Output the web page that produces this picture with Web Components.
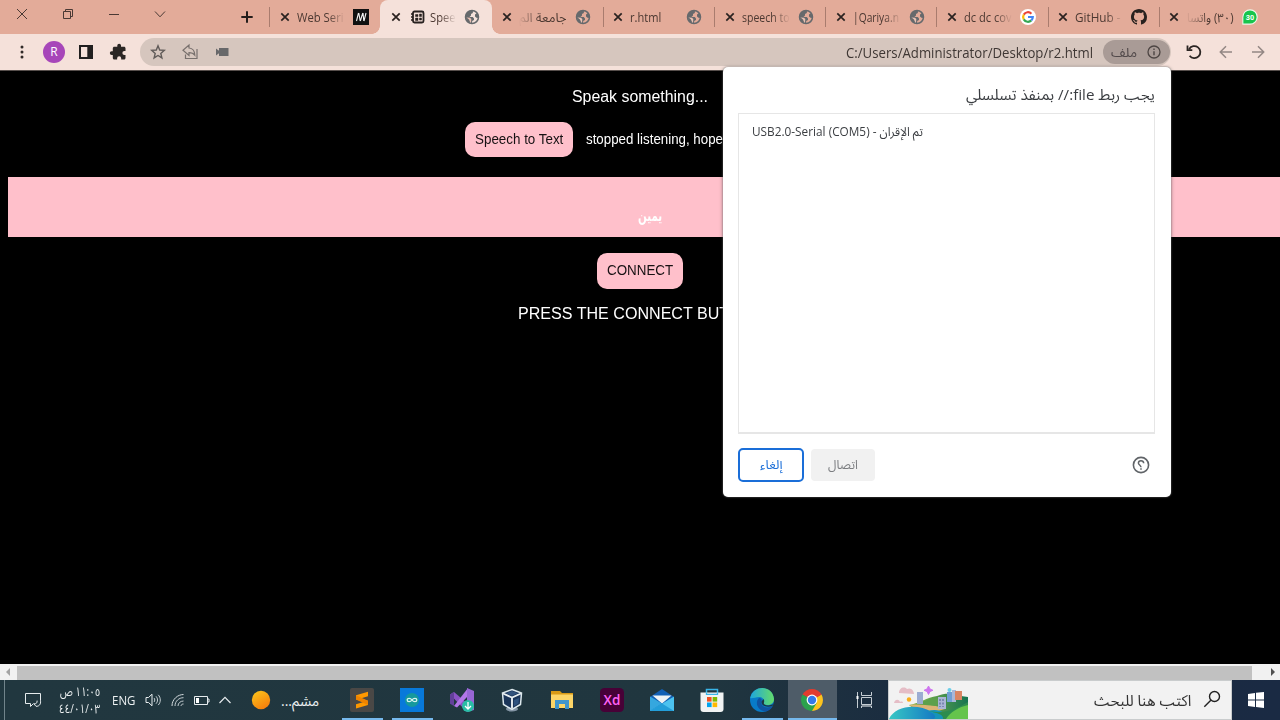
<!DOCTYPE html>
<html lang="ar">
<head>
<meta charset="utf-8">
<title>Speech to Text</title>
<style>
html,body{margin:0;width:1280px;height:720px;overflow:hidden;background:#000}
body{font-family:"Open Sans","Noto Sans Arabic","DejaVu Sans",sans-serif}
</style>
</head>
<body>
<browser-desktop></browser-desktop>
<script>
function component(name, html, setup) {
  const t = document.createElement('template');
  t.innerHTML = html;
  customElements.define(name, class extends HTMLElement {
    connectedCallback() {
      if (this.shadowRoot) return;
      this.attachShadow({mode: 'open'}).appendChild(t.content.cloneNode(true));
      if (setup) setup(this, this.shadowRoot);
    }
  });
}

const globe = `<circle cx="8" cy="8" r="6.500" stroke="#66696c" stroke-width="1.500"/><path fill="#66696c" d="M9 1.500 8.800 4 7 5v1.600L5.500 8H8.800l1.200 1.500v1.600L8.200 12 8 14.500C3.500 14.500 1.500 11 1.500 8 1.500 4 5 1 9 1.500zM13 4l-2 1.500V7.500l1.500 1.300 2 .2c.3-2-.3-4-1.500-5z"/><path fill="#e8c0b3" d="M2.300 8.600 6 8.800l1.300 1.300-.3 3.600C4.500 13.400 2.300 11.300 2.300 8.600z"/><path fill="#66696c" d="m2 8 3 2.500L6.500 14C3.500 13.500 1.700 11 2 8z"/>`;
const icons = {
  close: [10, `<path d="M1.300 1.300 8.700 8.700M8.700 1.300 1.300 8.700" stroke="#2a2220" stroke-width="1.700"/>`],
  winclose: [12, `<path d="M1 1 11 11M11 1 1 11" stroke="#4a3934" stroke-width="1"/>`],
  restore: [12, `<path d="M1.500 3.500h7v7h-7zM3.500 3.500v-2h7v7h-2" stroke="#4a3934" fill="none"/>`],
  minimize: [12, `<path d="M1 6.500h10" stroke="#4a3934"/>`],
  down: [12, `<path d="M1 3.500 6 8.800 11 3.500" fill="none" stroke="#4a3934"/>`],
  plus: [12, `<path d="M6 .3v11.400M.3 6h11.400" stroke="#251d1b" stroke-width="2"/>`],
  globe: [16, globe],
  medium: [16, `<path d="M0 0h16v16H0z" fill="#111"/><path d="M5.500 4 3.500 12M5.800 4l1.400 8M9.800 4l-2.500 8M10 4l.8 8M13 4l-2 8" stroke="#f3f3f3" stroke-width="1.100" fill="none"/>`],
  serial: [14, `<rect x="2" y="1.500" width="10.500" height="11" rx="1.500" fill="none" stroke="#28211f" stroke-width="1.800"/><path d="M4.500 4.500H7v2H4.500zM8.500 4h2v2.500h-2zM4.500 8H7v2.500H4.500zM8.500 8h2v2h-2z" stroke="#28211f" fill="#28211f" stroke-width=".5"/><path d="M0 4h2M0 7h2M0 10h2" stroke="#28211f" stroke-width="1.300"/>`],
  google: [16, `<circle cx="8" cy="8" r="8" fill="#fff"/><g fill="none" stroke-width="2.200"><path d="M11.400 4.700A4.800 4.800 0 0 0 3.800 5.600" stroke="#ea4335"/><path d="M3.800 5.600a4.800 4.800 0 0 0 0 4.800" stroke="#fbbc05"/><path d="M3.800 10.400a4.800 4.800 0 0 0 7.500 1" stroke="#34a853"/><path d="M11.300 11.400A4.800 4.800 0 0 0 12.800 8H8" stroke="#4285f4"/></g>`],
  github: [16, `<path fill="#28211f" d="M8 0C3.580 0 0 3.580 0 8c0 3.540 2.290 6.530 5.470 7.590.4.070.55-.17.55-.38 0-.19-.01-.82-.01-1.490-2.010.37-2.530-.49-2.690-.94-.09-.23-.48-.94-.82-1.130-.28-.15-.68-.52-.01-.53.63-.01 1.080.58 1.230.82.72 1.210 1.870.87 2.330.66.07-.52.28-.87.51-1.070-1.780-.2-3.640-.89-3.640-3.950 0-.87.31-1.590.82-2.150-.08-.2-.36-1.020.08-2.120 0 0 .67-.21 2.200.82.64-.18 1.320-.27 2-.27s1.360.09 2 .27c1.530-1.040 2.200-.82 2.200-.82.44 1.100.16 1.920.08 2.120.51.56.82 1.270.82 2.150 0 3.070-1.870 3.750-3.650 3.950.29.25.54.73.54 1.480 0 1.070-.01 1.930-.01 2.200 0 .21.15.46.55.38A8.010 8.010 0 0 0 16 8c0-4.420-3.580-8-8-8z"/>`],
  whatsapp: [16, `<path d="M.3 15.700 .4 8A7.700 7.700 0 1 1 8 15.700z" fill="#eaf7e9"/><path d="M1.400 14.600V8A6.600 6.600 0 1 1 8 14.600z" fill="#16c54c"/><text x="8" y="10.800" text-anchor="middle" font-family="Liberation Sans" font-weight="700" font-size="7.500" fill="#fff">30</text>`],
  more: [16, `<g fill="#302a28"><circle cx="8" cy="2.900" r="1.500"/><circle cx="8" cy="8" r="1.500"/><circle cx="8" cy="13.100" r="1.500"/></g>`],
  panel: [16, `<path d="M2 2h12v12H2z" fill="none" stroke="#211f1f" stroke-width="2"/><path d="M9.300 2H14v12H9.300z" fill="#211f1f"/>`],
  puzzle: [20, `<path transform="translate(20 0) scale(-.83 .83)" fill="#2b2624" d="M20.500 11H19V7c0-1.100-.9-2-2-2h-4V3.500a2.500 2.500 0 0 0-5 0V5H4c-1.100 0-2 .9-2 2v3.800h1.500a2.700 2.700 0 0 1 0 5.400H2V20c0 1.100.9 2 2 2h3.800v-1.500a2.700 2.700 0 0 1 5.400 0V22H17c1.100 0 2-.9 2-2v-4h1.500a2.500 2.500 0 0 0 0-5z"/>`],
  star: [16, `<path d="M8 1.800 9.700 6l4.600.4-3.500 3 1.100 4.500L8 11.500l-3.900 2.400 1.100-4.500-3.500-3L6.300 6z" fill="none" stroke="#615b59" stroke-width="1.400"/>`],
  share: [18, `<path d="M2 7.200 8 2v3c4 .3 5.700 3.600 5.800 7.200C12.300 10.200 10.600 9.600 8 9.600v2.800zM4.500 11.500v4h11.500V6" fill="none" stroke="#78706d" stroke-width="1.200"/>`],
  camera: [14, `<path d="M4 3h9.500v8H4V8.300L1 10.500v-7L4 5.700z" fill="#68686a"/>`],
  info: [14, `<circle cx="7" cy="7" r="6" fill="none" stroke="#4d4543" stroke-width="1.300"/><path d="M7 6.200v4M7 3.600v1.400" stroke="#4d4543" stroke-width="1.400"/>`],
  reload: [16, `<path d="M3.200 5A6 6 0 1 1 3.600 11.800M1.500 1.500V6.200H6.300" fill="none" stroke="#2b2523" stroke-width="1.800"/>`],
  back: [16, `<path d="M14 8H2.500M8 2.300 2.300 8l5.700 5.700" fill="none" stroke="#938784" stroke-width="1.500"/>`],
  forward: [16, `<path d="M2 8h11.500M8 2.300 13.700 8 8 13.700" fill="none" stroke="#938784" stroke-width="1.500"/>`],
  help: [18, `<circle cx="9" cy="9" r="7.600" fill="none" stroke="#606468" stroke-width="1.600"/><path d="M11.700 7.200C11.500 4 6.500 4 6.400 7c0 2 2.600 2.100 2.600 4.300M9 12.300v1.500" fill="none" stroke="#606468" stroke-width="1.500"/>`],
  notice: [20, `<path d="M2.500 3.500h15v7.200M2.500 3.500v10H7.500v3l3-3M17.500 10.500c.6 4-1.500 6-4.500 5.800l-2.200-2.500c2 .5 3.600-.8 3.300-3.200" fill="none" stroke="#e5ebed"/>`],
  sound: [18, `<path d="M2 6.500h2.500L8 3.200v11.600L4.500 11.500H2z" fill="none" stroke="#e8eef0"/><path d="M10 7c1 1 1 3 0 4M12 5.300c2 2 2 5.400 0 7.400M14.200 3.800c2.800 2.800 2.800 7.500 0 10.300" fill="none" stroke="#c7d0d4"/>`],
  wifi: [16, `<g fill="none"><path d="M2 14C2 7 8 2.500 13.500 2.500" stroke="#d6dde0"/><path d="M5 14C5 9 9 5.700 13.500 5.700M8 14c0-3 2.500-5 5.500-5M11 14c.2-1.400 1-2 2.500-2" stroke="#c5ced2"/></g>`],
  battery: [18, `<path d="M1.500 5.500h13v8h-13zM14.500 8H16v3h-1.500" fill="none" stroke="#e5eaed"/><path d="M3 7h3v5H3z" fill="#fff"/>`],
  up: [14, `<path d="M1.500 10 7 4.300l5.500 5.700" fill="none" stroke="#e6ebed" stroke-width="1.200"/>`],
  sun: [20, `<defs><linearGradient id="a" x1=".2" y1="0" x2=".8" y2="1"><stop stop-color="#fbc21b"/><stop offset="1" stop-color="#f57a0c"/></linearGradient></defs><circle cx="10" cy="10" r="9.200" fill="url(#a)"/>`],
  sublime: [24, `<rect width="24" height="24" rx="2" fill="#4a4846"/><path d="M6 7.300 18 3.800v4.400L10.500 10.500 18 12.800v4.300L6 20.400v-4.200l7.500-2.200L6 11.600z" fill="#ff9800"/><path d="M6 7.300v4.300l12 5.500v-4.300z" fill="#f08300"/>`],
  arduino: [24, `<path d="M0 0h24v24H0z" fill="#0879da"/><circle cx="12" cy="12" r="7" fill="#15999d"/><path d="M12 12c-1.500-2.200-4.800-2.200-4.800 0s3.300 2.200 4.800 0 4.800-2.200 4.800 0-3.300 2.200-4.800 0z" fill="none" stroke="#d8f4ef" stroke-width="1.300"/>`],
  vs: [26, `<path d="M1 7.500 5 5l14 12-1 8z" fill="#8b52c6"/><path d="m1 7.500 4-2.500v14l-4-2.300z" fill="#63409b"/><path d="M5 19 19 1v8L8 20.500z" fill="#b276e7"/><path d="m18 1 7 3v19l-7 2z" fill="#9866d5"/><circle cx="19" cy="19" r="6" fill="#29bda5"/><path d="M19 15v7m-3-3 3 3 3-3" fill="none" stroke="#fff" stroke-width="1.300"/>`],
  vbox: [24, `<ellipse cx="12" cy="21" rx="6" ry="2.600" fill="#8495a5"/><path d="m12 1.500 9.500 3.500-1 11.500-8.500 5-8.500-5L2.500 5z" fill="#1b3559" stroke="#dce8ed" stroke-width="1.500"/><path d="m3 5.500 9 4 9-4M12 9.500v11" fill="none" stroke="#e8eff2" stroke-width="1.900"/><path d="m12 3 6 2.300L12 7.800 6 5.300z" fill="#31527c"/><path d="m14 12 5-2-.5 5.500-4.500 2.800z" fill="#2e527e"/>`],
  folder: [24, `<path d="M1 3h9l2 2h11v4H1z" fill="#d89a16"/><path d="M1 6.500h22V20H1z" fill="#fcd567"/><path d="M5 12h14v9h-4v-5H9v5H5z" fill="#4096cd"/>`],
  xd: [24, `<rect width="24" height="24" rx="4.500" fill="#470137"/><text x="12" y="17" text-anchor="middle" textLength="17" font-size="13.500" font-weight="600" font-family="Open Sans" fill="#ff61f6">Xd</text>`],
  mail: [26, `<path d="m1 10 12-8 12 8v14H1z" fill="#1260b5"/><path d="M3.500 8.500h19l-9.500 8z" fill="#eef3f5"/><path d="M1 9.500 13 16.500 1 24z" fill="#35a7df"/><path d="M25 9.500V24H1z" fill="#4cc2ef"/><path d="m13 16.500 12 7.500H1z" fill="#239ed9"/>`],
  store: [24, `<path d="M6.500 7V1.500h11V7" fill="none" stroke="#39b5e7" stroke-width="1.500"/><path d="M.5 4.500h23V21q0 3-3 3h-17q-3 0-3-3z" fill="#f1f3f3"/><path d="M6.500 4.500v1.800h11V4.500" stroke="#39b5e7" stroke-width="1.300"/><path d="M7 9h4.600v4.600H7z" fill="#f25022"/><path d="M12.600 9h4.600v4.600h-4.600z" fill="#7fba00"/><path d="M7 14.500h4.600v4.600H7z" fill="#00a4ef"/><path d="M12.600 14.500h4.600v4.600h-4.600z" fill="#ffb900"/>`],
  edge: [26, `<defs><linearGradient id="b"><stop stop-color="#1fa6dc"/><stop offset="1" stop-color="#65dc6a"/></linearGradient></defs><circle cx="13" cy="13" r="12" fill="#087bc9"/><path d="M1.200 11C4-3 24-2 25 12c0 4-3 6-7 6-3 0-4-1-3.500-2.300 1.500-3-1-5.700-4-5.700-4 0-8 2-9.300 1z" fill="url(#b)"/><path d="M10 11c-5 5-.5 12.500 6 13.500 3-.3 6-2 8-5.500-6 3-13 1-11.500-5C12.800 13 13 11 10 11z" fill="#1053a1"/><path d="M14.500 12c2 3-1 4 1 5.500 2.500 1.500 6 1.200 8.500-.5l-.5 2C18 21 12 19 12.500 14.500z" fill="#1d3443"/>`],
  chrome: [24, `<path d="M12 12 2.500 6.500A11 11 0 0 1 21.500 6.500z" fill="#e23b2e"/><path d="M12 12 2.500 6.500A11 11 0 0 0 12 23l5.500-8z" fill="#2ba24c"/><path d="M12 12l9.500-5.500A11 11 0 0 1 12 23l4.800-8.300z" fill="#fcc31e"/><path d="M12 6.500h9.500L12 12z" fill="#e23b2e"/><circle cx="12" cy="12" r="5.400" fill="#fff"/><circle cx="12" cy="12" r="4.200" fill="#3579e9"/>`],
  taskview: [18, `<path d="M2.500 1v16M6.500 1v3.500h10V1M6.500 6.500h10v7h-10zM6.500 17v-2h10v2" fill="none" stroke="#c5cdd3"/><path d="M1.500 5h2v3h-2z" fill="#fff"/><path d="M7 14h9v2H7z" fill="#8a949d"/>`],
  search: [20, `<circle cx="12.500" cy="7.500" r="5" fill="none" stroke="#222" stroke-width="1.400"/><path d="m8.800 11.200-6.500 6.500" stroke="#222" stroke-width="1.400"/>`],
  windows: [18, `<path d="m1 3 7-1v6.500H1zm8-1.200L17 1v7.500H9zM1 9.500h7V16l-7-1zm8 0h8V17l-8-.9z" fill="#fff"/>`]
};

component('ui-icon', `<style>:host{display:block;flex:none}svg{display:block}</style>`, (el, root) => {
  const [size, art] = icons[el.getAttribute('name')];
  const px = +(el.getAttribute('size') || size);
  root.innerHTML += `<svg width="${px}" height="${px}" viewBox="0 0 ${size} ${size}" fill="none">${art}</svg>`;
});

component('city-art', `<style>:host{display:block;width:79px;height:38px;flex:none}svg{display:block}</style>
<svg width="79" height="38" viewBox="0 0 79 38"><defs><linearGradient id="w"><stop stop-color="#38c7c4"/><stop offset="1" stop-color="#1273c4"/></linearGradient><linearGradient id="g"><stop stop-color="#8dbb49"/><stop offset="1" stop-color="#167451"/></linearGradient></defs>
<path d="M10 12c0-5 5-7 8-4 4-2 7 2 7 5zM5 22c1-4 5-4 6-1 2-1 3 0 3 1z" fill="#e5bdc6"/><circle cx="20" cy="18.500" r="2.200" fill="#fbac18"/>
<path d="m39.500 5 1.500 3 3 1.300-3 1.200-1.500 3-1.500-3-3-1.200 3-1.300z" fill="#ce75ef" stroke="#ce75ef"/>
<path d="M20 24c10-1 18-8 28-9 13-5 20 0 31 1v22H37z" fill="url(#g)"/><path d="M20 24c14-2 27 0 36 4l-18 5z" fill="#dcb475"/><path d="M25 23c8-1 15-6 23-6 5 3 2 7-1 8z" fill="#5da04c"/>
<path d="M0 38c6-13 28-16 43-7 5 3 8 4 7 7z" fill="url(#w)"/><path d="M38 30c12-3 20 1 19 8H45c3-4-2-6-7-8z" fill="#1594ba"/><path d="M40 30c12 3 24 0 39-9v17H54c1-5-7-6-14-8z" fill="#2d8c4f"/><path d="M57 38c4-7 13-12 22-14v14z" fill="#65c44c"/>
<path d="M28 11h6v12h-6z" fill="#9cacd2"/><path d="M49 16h8v12h-8z" fill="#aab5d5"/><path d="M58 11h5v10h-5z" fill="#719ed4"/><path d="M63 9h4v12h-4z" fill="#a9b7d9"/><path d="M66 10h7v9h-7z" fill="#da8564"/><circle cx="60.500" cy="9" r="2" fill="#6bcfe9"/><path d="M51 18v8M54 18v8" stroke="#4a5f8d" stroke-dasharray="2 1.500"/></svg>`);

component('browser-tab', `<style>
:host{display:flex;position:relative;width:111.2px;height:34px;box-sizing:border-box;align-items:center;padding-left:10.500px;flex:none;color:#4b3831;font-size:12.500px;background:linear-gradient(#a97c6e,#a97c6e) 0 50%/1px 20px no-repeat}
:host([active]){background:#f5e1da;border-radius:8px 8px 0 0}
:host([active])::before,:host([active])::after{content:"";position:absolute;bottom:0;width:8px;height:8px}
:host([active])::before{left:-8px;background:radial-gradient(circle at 0 0,transparent 7.500px,#f5e1da 8px)}
:host([active])::after{right:-8px;background:radial-gradient(circle at 100% 0,transparent 7.500px,#f5e1da 8px)}
:host([plain]){background:none}
.t{display:flex;align-items:center;gap:5px;width:48px;margin:0 8px 0 7px;overflow:hidden;white-space:nowrap;-webkit-mask:linear-gradient(90deg,#000 65%,transparent)}
:host([active]) .t{width:45px;margin-left:10px}
:host([rtl]) .t{justify-content:flex-end;-webkit-mask:linear-gradient(270deg,#000 55%,transparent)}
:host([full]) .t{-webkit-mask:none}
</style><ui-icon name="close"></ui-icon><div class="t"><slot></slot></div><span class="i"></span>`, (el, root) => {
  root.querySelector('.i').innerHTML = `<ui-icon name="${el.getAttribute('icon')}"></ui-icon>`;
});

component('tab-strip', `<style>
:host{display:flex;height:34px;background:#e3ab99}
.c{display:flex;width:184px;margin-left:-1px;height:28px}.c>*{width:46px;display:grid;place-items:center}
.n{width:86.300px;display:grid;place-items:center;padding-left:41px;box-sizing:border-box}
</style>
<div class="c"><span><ui-icon name="winclose"></ui-icon></span><span><ui-icon name="restore"></ui-icon></span><span><ui-icon name="minimize"></ui-icon></span><span><ui-icon name="down"></ui-icon></span></div>
<div class="n"><ui-icon name="plus"></ui-icon></div>
<browser-tab icon="medium"><fit-label w="47">Web Seri</fit-label></browser-tab>
<browser-tab icon="globe" active><ui-icon name="serial"></ui-icon><fit-label w="26">Spee</fit-label></browser-tab>
<browser-tab icon="globe" rtl plain><fit-label w="48" rtl>جامعة الم</fit-label></browser-tab>
<browser-tab icon="globe" full><fit-label w="31">r.html</fit-label></browser-tab>
<browser-tab icon="globe"><fit-label w="48">speech to</fit-label></browser-tab>
<browser-tab icon="globe"><fit-label w="46">|Qariya.n</fit-label></browser-tab>
<browser-tab icon="google"><fit-label w="48">dc dc cov</fit-label></browser-tab>
<browser-tab icon="github"><fit-label w="46">GitHub -</fit-label></browser-tab>
<browser-tab icon="whatsapp" rtl><fit-label w="47" rtl>(٣٠) واتسا</fit-label></browser-tab>`);

component('tool-bar', `<style>
:host{display:flex;height:37px;box-sizing:border-box;background:#f5e1da;border-bottom:1px solid #574f4c;align-items:center;padding-left:6px}
.b{width:32px;display:grid;place-items:center;flex:none}
.av{width:22px;height:22px;border-radius:50%;background:#a746b9;color:#fff;display:grid;place-items:center;font:12px/1 "Open Sans"}
.o{display:flex;align-items:center;height:28px;width:1031px;box-sizing:border-box;margin:0 7px 0 6px;border-radius:14px;background:#d6c6be;padding:0 1px 0 2px}
.u{margin-left:auto;color:#3f3734;font-size:14px}
.f{display:flex;align-items:center;justify-content:space-between;width:67px;box-sizing:border-box;height:24px;border-radius:12px;background:#a99b96;margin-left:10px;padding:0 9px 0 8px;color:#51494a;font-size:13px}
</style>
<span class="b"><ui-icon name="more"></ui-icon></span><span class="b"><span class="av">R</span></span><span class="b"><ui-icon name="panel"></ui-icon></span><span class="b"><ui-icon name="puzzle" size="18"></ui-icon></span>
<div class="o"><span class="b"><ui-icon name="star"></ui-icon></span><span class="b"><ui-icon name="share"></ui-icon></span><span class="b"><ui-icon name="camera"></ui-icon></span>
<fit-label class="u" w="247">C:/Users/Administrator/Desktop/r2.html</fit-label>
<div class="f"><fit-label w="26" rtl>ملف</fit-label><ui-icon name="info"></ui-icon></div></div>
<span class="b"><ui-icon name="reload"></ui-icon></span><span class="b"><ui-icon name="back"></ui-icon></span><span class="b"><ui-icon name="forward"></ui-icon></span>`);

component('pink-button', `<style>:host{display:grid;place-items:center;height:35px;box-sizing:border-box;border-radius:10px;background:#ffc0cb;color:#171113;font-size:14px;flex:none}</style><slot></slot>`);

component('web-page', `<style>
:host{display:block;height:593px;background:#000;color:#fff;font-family:"Liberation Sans","DejaVu Sans",sans-serif;overflow:hidden;padding-left:8px}
p{margin:0;display:flex;align-items:center}
.one{height:18px;margin-top:16px;padding-left:564px;font-size:16px}
.two{margin-top:17px;height:35px;padding-left:457px;gap:13px;font-size:14px}
.two pink-button{width:108px}
.band{margin-top:20px;height:60px;background:#ffc0cb;padding:18px 0 0 630px;box-sizing:border-box;font:700 15px "DejaVu Sans"}
.three{margin-top:16px;padding-left:589px}.three pink-button{width:86px;height:36px;padding-bottom:2px}
.four{margin-top:15px;height:18px;padding-left:510px;font-size:16px}
</style>
<p class="one"><fit-label w="136">Speak something...</fit-label></p>
<p class="two"><pink-button><fit-label w="88">Speech to Text</fit-label></pink-button><fit-label w="137">stopped listening, hope</fit-label></p>
<p class="band"><fit-label w="24" rtl>يمين</fit-label></p>
<p class="three"><pink-button><fit-label w="66">CONNECT</fit-label></pink-button></p>
<p class="four"><fit-label w="211">PRESS THE CONNECT BUT</fit-label></p>`);

component('scroll-bar', `<style>:host{display:flex;height:16px;background:#f1f1f1;align-items:center;justify-content:space-between;padding:0 5px 0 6px;box-sizing:border-box}
.l,.r{border:4px solid transparent;width:0;height:0}.l{border-right-color:#a3a3a3;border-left:0}.r{border-left-color:#505050;border-right:0}.t{width:1235px;height:14px;background:#c1c1c1;margin:1px 19px 0 7px;flex:none}</style><i class="l"></i><i class="t"></i><i class="r"></i>`);

component('port-dialog', `<style>
:host{display:flex;flex-direction:column;position:absolute;left:723px;top:67px;width:448px;height:430px;box-sizing:border-box;border-radius:5px;background:#fff;padding:15px 16px 14px 15px;box-shadow:0 0 2px #777,0 1px 4px #0005;color:#3a3d41}
.h{height:24px;display:flex;align-items:center;justify-content:flex-end;font-size:15px}
.l{margin:7px 0 0 0;height:321px;box-sizing:border-box;border:1px solid #e6e6e6;border-bottom:2px solid #e6e6e6;padding:9px 13px;font-size:12.500px;width:417px}
.f{display:flex;align-items:center;height:34px;margin-top:14px;font-size:12.500px}
.c,.k{display:grid;place-items:center;box-sizing:border-box;padding-bottom:1px}
.c{width:66px;height:34px;border:2px solid #1a6ed8;border-radius:5px;color:#1a6ed8}
.k{width:64px;height:32px;border-radius:4px;background:#f1f1f1;color:#7b7d80;margin-left:7px}
ui-icon{margin:0 5px 0 auto}
</style>
<div class="h"><fit-label w="189" rtl>يجب ربط file:// بمنفذ تسلسلي</fit-label></div>
<div class="l"><fit-label w="171">USB2.0-Serial (COM5) - تم الإقران</fit-label></div>
<div class="f"><span class="c"><fit-label w="22" rtl>إلغاء</fit-label></span><span class="k"><fit-label w="30" rtl>اتصال</fit-label></span><ui-icon name="help"></ui-icon></div>`);

component('app-button', `<style>:host{display:grid;place-items:center;width:50px;height:40px;flex:none;box-sizing:border-box}
:host([open]){background:linear-gradient(#76b9ed,#76b9ed) 50% 100%/41px 2px no-repeat}
:host([current]){background:linear-gradient(#76b9ed,#76b9ed) 50% 100%/49px 2px no-repeat,linear-gradient(#4e5c68,#4e5c68) 50% 0/49px 40px no-repeat}</style><slot></slot>`);

component('task-bar', `<style>
:host{display:flex;height:40px;background:linear-gradient(90deg,#21373f,#20363f 55%,#1a2b40 72%,#1a2a43);align-items:center;color:#eef2f3}
.s{width:1px;height:40px;background:#71848b;margin:0 18px 0 4px}
.k{display:flex;flex-direction:column;align-items:flex-end;width:43px;margin:0 11px 0 14px;font-size:12.500px}.k>*{height:17px}
.e{font-size:12.500px;margin:0 9px 0 1px}.w{font-size:14px;margin:0 18px 0 10px}
.q{display:flex;width:344px;height:40px;box-sizing:border-box;border:1px solid #c9cccd;background:#f2f2f2;color:#333;align-items:center;margin-left:auto}
.q fit-label{margin-left:auto;font-size:15.500px}.q ui-icon{margin:0 9px 3px 11px}
.x{width:48px;display:grid;place-items:center}
</style>
<i class="s"></i><ui-icon name="notice"></ui-icon>
<div class="k"><fit-label w="40" rtl>١١:٠٥ ص</fit-label><fit-label w="41">٤٤/٠١/٠٣</fit-label></div>
<fit-label class="e" w="23">ENG</fit-label>
<ui-icon name="sound"></ui-icon><ui-icon name="wifi" style="margin-left:8px"></ui-icon><ui-icon name="battery" style="margin-left:7px"></ui-icon><ui-icon name="up" style="margin-left:7px"></ui-icon><ui-icon name="sun" style="margin-left:19px"></ui-icon>
<fit-label class="w" w="38" rtl>مشم...</fit-label>
<app-button open><ui-icon name="sublime"></ui-icon></app-button><app-button open><ui-icon name="arduino"></ui-icon></app-button><app-button><ui-icon name="vs"></ui-icon></app-button><app-button><ui-icon name="vbox"></ui-icon></app-button><app-button><ui-icon name="folder"></ui-icon></app-button><app-button><ui-icon name="xd"></ui-icon></app-button><app-button><ui-icon name="mail"></ui-icon></app-button><app-button><ui-icon name="store"></ui-icon></app-button><app-button open><ui-icon name="edge"></ui-icon></app-button><app-button current><ui-icon name="chrome"></ui-icon></app-button><app-button><ui-icon name="taskview" style="margin-left:3px"></ui-icon></app-button>
<div class="q"><city-art></city-art><fit-label w="97" rtl>اكتب هنا للبحث</fit-label><ui-icon name="search"></ui-icon></div><div class="x"><ui-icon name="windows"></ui-icon></div>`);

component('browser-desktop', `<style>:host{display:flex;flex-direction:column;position:relative;width:1280px;height:720px;overflow:hidden}</style>
<tab-strip></tab-strip><tool-bar></tool-bar><web-page></web-page><scroll-bar></scroll-bar><task-bar></task-bar><port-dialog></port-dialog>`);

// A one-line label whose text is condensed or widened to a fixed width.
component('fit-label', `<style>:host{display:block;flex:none;direction:ltr;white-space:nowrap;line-height:17px}span{display:inline-block;transform-origin:0 50%}</style><span><slot></slot></span>`, (el, root) => {
  const span = root.querySelector('span'), w = +el.getAttribute('w');
  if (el.hasAttribute('rtl')) span.dir = 'rtl';
  const natural = span.offsetWidth;
  el.style.width = w + 'px';
  if (natural) span.style.transform = `scaleX(${w / natural})`;
});
</script>
</body>
</html>
